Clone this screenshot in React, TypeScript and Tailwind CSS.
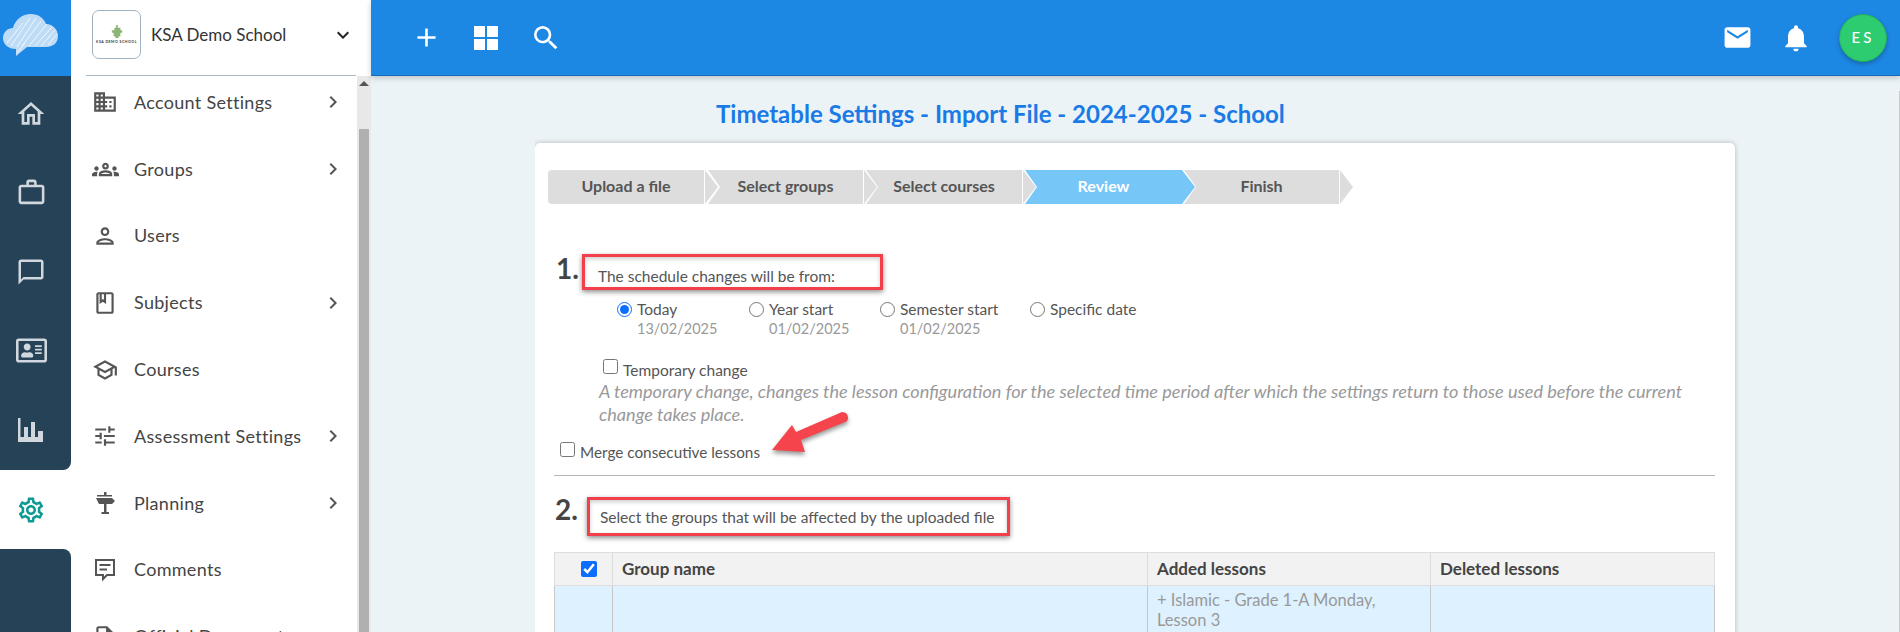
import type { ReactNode } from "react";
import { FaRegAddressCard } from "react-icons/fa";
import {
  MdAdd,
  MdChevronRight,
  MdDomain,
  MdEmail,
  MdKeyboardArrowDown,
  MdNotifications,
  MdOutlineBook,
  MdOutlineChatBubbleOutline,
  MdOutlineDescription,
  MdOutlineGroups,
  MdOutlineHome,
  MdOutlinePerson,
  MdOutlineSchool,
  MdOutlineSettings,
  MdOutlineTune,
  MdOutlineWorkOutline,
  MdSearch,
} from "react-icons/md";

const SignIcon = () => (
  <svg width="22" height="24" viewBox="0 0 22 24" fill="currentColor">
    <path d="M10 1h2.5v3H18v1.500H3V4h7z" />
    <path d="M2 7h16l3 3-3 3H12.500v8H15v2H7.500v-2H10v-8H5z" />
  </svg>
);

const CommentIcon = () => (
  <svg width="24" height="25" viewBox="0 0 24 25" fill="none" stroke="currentColor" strokeWidth="2">
    <path d="M3 3h18v15h-7l-4 4v-4H3z" />
    <path d="M6.500 8h11M6.500 12.500h7.500" />
  </svg>
);

const menuItems = [
  { label: "Account Settings", icon: <MdDomain size={26} />, arrow: true },
  { label: "Groups", icon: <MdOutlineGroups size={27} />, arrow: true },
  { label: "Users", icon: <MdOutlinePerson size={26} />, arrow: false },
  { label: "Subjects", icon: <MdOutlineBook size={26} />, arrow: true },
  { label: "Courses", icon: <MdOutlineSchool size={26} />, arrow: false },
  { label: "Assessment Settings", icon: <MdOutlineTune size={26} />, arrow: true },
  { label: "Planning", icon: <SignIcon />, arrow: true },
  { label: "Comments", icon: <CommentIcon />, arrow: false },
  { label: "Official Documents", icon: <MdOutlineDescription size={26} />, arrow: false },
];

const CloudLogo = () => (
  <svg width="56" height="46" viewBox="0 0 56 46">
    <path
      d="M13 36 C5 36 0 31 0 25 C0 19 5 15 10 15 C12 7 19 1 28 1 C35 1 41 5 43 11 C50 11 55 17 55 23 C55 30 50 34 43 34 L24 34 L13 43 Z"
      fill="#bfdcf6"
    />
    <g stroke="#ffffff" strokeWidth="1" opacity="0.75">
      <path d="M4 30 L20 10" />
      <path d="M8 33 L27 5" />
      <path d="M14 34 L33 5" />
      <path d="M19 33 L38 8" />
      <path d="M26 33 L44 11" />
      <path d="M32 33 L49 14" />
      <path d="M38 33 L52 17" />
      <path d="M45 32 L54 21" />
      <path d="M14 40 L22 30" />
    </g>
  </svg>
);

const SchoolLogo = () => (
  <div className="flex h-[49px] w-[49px] flex-col items-center justify-center rounded-[7px] border border-[#9fb3c2] bg-white">
    <svg width="12" height="15" viewBox="0 0 14 15">
      <path d="M6 0h2v3h3v3h2v3h-2v4H9v2H5v-2H3V9H1V6h3V3h2z" fill="#8db573" />
    </svg>
    <span className="mt-[2px] whitespace-nowrap text-[3.5px] font-bold leading-none tracking-[0.5px] text-[#333]">
      KSA DEMO SCHOOL
    </span>
  </div>
);

const BarsIcon = () => (
  <svg width="26" height="24" viewBox="0 0 26 24" fill="#d0d8de">
    <path d="M0 0h2.500v19H6V9h4v10h3V4h4v15h3v-6h5v11H0z" />
  </svg>
);

const WindowIcon = () => (
  <svg width="24" height="24" viewBox="0 0 24 24" fill="#ffffff">
    <path d="M0 0h11v11H0zM13 0h11v11H13zM0 13h11v11H0zM13 13h11v11H13z" />
  </svg>
);

const RailItem = ({ children }: { children: ReactNode }) => (
  <div className="flex h-[79px] items-center justify-center pr-[9px] text-[#d0d8de]">{children}</div>
);

const Rail = () => (
  <div className="flex h-full w-[71px] shrink-0 flex-col bg-white">
    <div className="flex h-[76px] shrink-0 items-center justify-center bg-[#1d87e4] pb-[5px] pr-[9px]">
      <CloudLogo />
    </div>
    <div className="h-[394px] shrink-0 rounded-br-[8px] bg-[#264257]">
      <div className="-translate-y-[2px]">
        <RailItem><MdOutlineHome size={32} /></RailItem>
        <RailItem><MdOutlineWorkOutline size={31} /></RailItem>
        <RailItem><MdOutlineChatBubbleOutline size={30} /></RailItem>
        <RailItem><FaRegAddressCard size={31} /></RailItem>
        <RailItem><BarsIcon /></RailItem>
      </div>
    </div>
    <div className="flex h-[79px] shrink-0 items-center justify-center pr-[9px] text-[#0e9a94]">
      <MdOutlineSettings size={30} />
    </div>
    <div className="flex-1 rounded-tr-[8px] bg-[#264257]" />
  </div>
);

const Sidebar = () => (
  <div className="flex h-full w-[300px] shrink-0 flex-col bg-white">
    <div className="mx-[15px] flex h-[76px] shrink-0 items-center border-b border-[#a9b8c4] pb-[6px] pl-[6px]">
      <SchoolLogo />
      <span className="ml-[10px] text-[17px] text-[#333]">KSA Demo School</span>
      <MdKeyboardArrowDown size={24} className="ml-auto mr-[1px] text-[#222]" />
    </div>
    <div className="flex min-h-0 flex-1">
      <div className="min-w-0 flex-1 overflow-hidden">
        <div className="-mt-[7px]">
          {menuItems.map((item) => (
            <div key={item.label} className="flex h-[66.8px] items-center pl-[20px] text-[#444]">
              <div className="flex w-[28px] justify-center text-[#555]">{item.icon}</div>
              <span className="ml-[15px] whitespace-nowrap text-[18px] tracking-[0.3px]">{item.label}</span>
              {item.arrow && <MdChevronRight size={24} className="ml-auto mr-[12px] text-[#555]" />}
            </div>
          ))}
        </div>
      </div>
      <div className="flex w-[14px] shrink-0 flex-col bg-[#e8e8e8] pl-[2px] pr-[2px]">
        <div className="flex h-[53px] justify-center pt-[5px]">
          <div className="h-0 w-0 border-x-[5px] border-b-[5px] border-x-transparent border-b-[#555]" />
        </div>
        <div className="flex-1 bg-[#b0b0b0]" />
      </div>
    </div>
  </div>
);

const Step = ({
  label,
  width,
  overlap,
  active,
  first,
}: {
  label: string;
  width: string;
  overlap: string;
  active?: boolean;
  first?: boolean;
}) => (
  <div className={`flex shrink-0 ${overlap}`}>
    {active ? (
      <div className={`${width} flex h-[34px] items-center justify-center bg-[#77c6f8] pb-[3px] pr-[13px] text-[16px] font-bold text-white [clip-path:polygon(0_0,157px_0,170px_50%,157px_100%,0_100%,12px_50%)]`}>
        {label}
      </div>
    ) : (
      <>
        <div
          className={`${width} flex h-[34px] items-center justify-center bg-[#dddddd] pb-[3px] text-[16px] font-bold text-[#555] ${
            first ? "rounded-l-[4px]" : "[clip-path:polygon(0_0,100%_0,100%_100%,0_100%,12px_50%)]"
          }`}
        >
          {label}
        </div>
        <div className="ml-px h-[34px] w-[13px] bg-[#dddddd] [clip-path:polygon(0_0,100%_50%,0_100%)]" />
      </>
    )}
  </div>
);

const Callout = ({ className, children }: { className: string; children: ReactNode }) => (
  <div className={`flex items-end border-[3px] border-[#f2404a] text-[15.500px] leading-[20px] text-[#555] shadow-[0_2px_5px_rgba(0,0,0,0.45),inset_0_2px_4px_rgba(0,0,0,0.2)] ${className}`}>
    {children}
  </div>
);

const DateOption = ({
  label,
  date,
  width,
  checked,
}: {
  label: string;
  date?: string;
  width: string;
  checked?: boolean;
}) => (
  <label className={`flex shrink-0 items-start ${width}`}>
    <input
      type="radio"
      name="from"
      defaultChecked={checked}
      className="mt-[3px] h-[15px] w-[15px] shrink-0 accent-[#0d6efd]"
    />
    <span className="ml-[5px] flex flex-col text-[15.500px] leading-[20px] text-[#555]">
      <span>{label}</span>
      {date && <span className="text-[14.500px] text-[#999]">{date}</span>}
    </span>
  </label>
);

const Arrow = () => (
  <svg
    className="absolute left-[237px] top-[269px] drop-shadow-[0_3px_2px_rgba(0,0,0,0.4)]"
    width="76"
    height="41"
    viewBox="0 0 76 41"
  >
    <path
      d="M0 38 L20 13 L24 20 L70 0 Q76 0 76 6 Q76 9 73 10 L29 28 L33 40 Z"
      fill="#f5444c"
    />
  </svg>
);

const Card = () => (
  <div className="relative mt-[15px] w-[1200px] rounded-[5px] bg-white px-[19px] pt-[27px] shadow-[0_0_5px_rgba(0,0,0,0.25)]">
    <div className="-ml-[6px] flex">
      <Step label="Upload a file" width="w-[156px]" overlap="-mr-[10px]" first />
      <Step label="Select groups" width="w-[155px]" overlap="-mr-[11px]" />
      <Step label="Select courses" width="w-[156px]" overlap="-mr-[11px]" />
      <Step label="Review" width="w-[170px]" overlap="-mr-[11px]" active />
      <Step label="Finish" width="w-[155px]" overlap="" />
    </div>

    <div className="mt-[50px] flex h-[36px] items-start pl-[2px]">
      <span className="-mt-[3px] text-[28px] font-bold leading-[34px] text-[#444]">1.</span>
      <Callout className="ml-[3px] h-[36px] w-[301px] pb-px pl-[13px]">The schedule changes will be from:</Callout>
    </div>
    <div className="ml-[63px] mt-[9px] flex">
      <DateOption label="Today" date="13/02/2025" width="w-[132px]" checked />
      <DateOption label="Year start" date="01/02/2025" width="w-[131px]" />
      <DateOption label="Semester start" date="01/02/2025" width="w-[150px]" />
      <DateOption label="Specific date" width="w-[150px]" />
    </div>
    <label className="ml-[49px] mt-[20px] flex items-start text-[15.500px] leading-[20px] text-[#555]">
      <input type="checkbox" className="h-[15px] w-[15px]" />
      <span className="ml-[5px] mt-[1px]">Temporary change</span>
    </label>
    <p className="ml-[45px] w-[1100px] text-[18.100px] italic leading-[23px] text-[#999]">
      A temporary change, changes the lesson configuration for the selected time period after which the settings return to those used before the current change takes place.
    </p>
    <label className="ml-[6px] mt-[16px] flex items-start text-[15.300px] leading-[20px] text-[#555]">
      <input type="checkbox" className="h-[15px] w-[15px]" />
      <span className="ml-[5px]">Merge consecutive lessons</span>
    </label>
    <Arrow />
    <div className="mt-[13px] h-px w-[1161px] bg-[#b5b5b5]" />

    <div className="mt-[21px] flex h-[39px] items-start pl-[1px]">
      <span className="-mt-[5px] text-[28px] font-bold leading-[34px] text-[#444]">2.</span>
      <Callout className="ml-[9px] h-[39px] w-[423px] pb-[6px] pl-[10px]">Select the groups that will be affected by the uploaded file</Callout>
    </div>

    <table className="mt-[16px] w-[1160px] table-fixed border-collapse">
      <colgroup>
        <col className="w-[58px]" />
        <col className="w-[535px]" />
        <col className="w-[283px]" />
        <col className="w-[284px]" />
      </colgroup>
      <thead>
        <tr className="h-[33px] bg-[#f2f2f2] text-left text-[17px] font-bold text-[#444]">
          <th className="border border-[#dddddd] pl-[10px] text-center align-middle">
            <input type="checkbox" defaultChecked className="h-[16px] w-[16px] translate-y-[2px] accent-[#0d6efd]" />
          </th>
          <th className="border border-[#dddddd] pl-[9px]">Group name</th>
          <th className="border border-[#dddddd] pl-[9px]">Added lessons</th>
          <th className="border border-[#dddddd] pl-[9px]">Deleted lessons</th>
        </tr>
      </thead>
      <tbody>
        <tr className="h-[70px] bg-[#def1fe] align-top">
          <td className="border border-[#c8c8c8]" />
          <td className="border border-[#c8c8c8]" />
          <td className="border border-[#c8c8c8] pl-[9px] pt-[4px] text-[16.500px] leading-[20px] text-[#999]">
            + Islamic - Grade 1-A Monday,
            <br />
            Lesson 3
          </td>
          <td className="border border-[#c8c8c8]" />
        </tr>
      </tbody>
    </table>
  </div>
);

export default function App() {
  return (
    <div className="flex h-[632px] w-[1900px] overflow-hidden bg-white font-['Lato','Noto_Sans',sans-serif]">
      <Rail />
      <Sidebar />
      <div className="relative flex min-w-0 flex-1 flex-col bg-[#ebf3f7]">
        <div className="relative z-10 flex h-[76px] shrink-0 items-center border-b border-[#1a6cb8] bg-[#1d87e4] pl-[40px] pr-[13px] text-white shadow-[0_2px_6px_rgba(0,0,0,0.2)]">
          <MdAdd size={31} />
          <div className="ml-[32px]"><WindowIcon /></div>
          <MdSearch size={32} className="ml-[32px]" />
          <div className="ml-auto flex items-center gap-[27px]">
            <MdEmail size={31} />
            <MdNotifications size={32} />
            <div className="flex h-[48px] w-[48px] items-center justify-center rounded-full border border-[#27ae60] bg-[#2ecc71] text-[15px] font-medium tracking-[3px] shadow-[0_2px_4px_rgba(0,0,0,0.25)]">
              ES
            </div>
          </div>
        </div>
        <div className="ml-[164px] min-h-0 flex-1 overflow-hidden">
          <h1 className="ml-[181px] mt-[24px] whitespace-nowrap text-[24px] font-bold leading-[28px] text-[#1a7ae6]">
            Timetable Settings - Import File - 2024-2025 - School
          </h1>
          <Card />
        </div>
        <div className="absolute bottom-0 right-0 top-[91px] w-px bg-[#c8cdd0]" />
      </div>
    </div>
  );
}
